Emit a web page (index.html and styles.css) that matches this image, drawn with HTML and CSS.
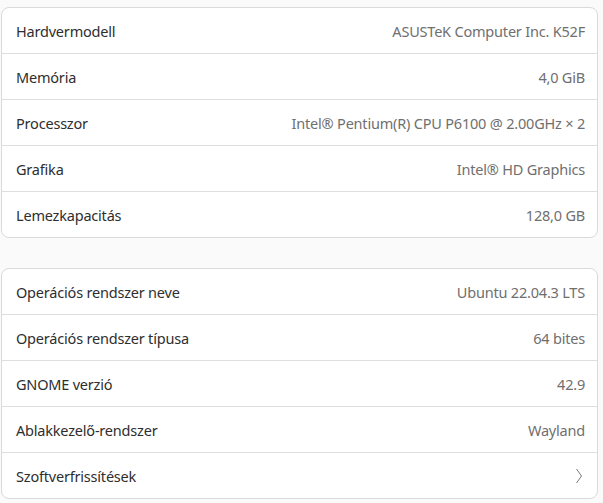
FILE: index.html
```html
<!DOCTYPE html>
<html lang="hu">
<head>
  <meta charset="UTF-8" />
  <title>Névjegy</title>
  <link rel="stylesheet" href="styles.css">
</head>
<body>
  <div class="list">
    <div class="row"><span class="label">Hardvermodell</span><span class="value">ASUSTeK Computer Inc. K52F</span></div>
    <div class="row"><span class="label">Memória</span><span class="value">4,0 GiB</span></div>
    <div class="row"><span class="label">Processzor</span><span class="value">Intel® Pentium(R) CPU P6100 @ 2.00GHz × 2</span></div>
    <div class="row"><span class="label">Grafika</span><span class="value">Intel® HD Graphics</span></div>
    <div class="row"><span class="label">Lemezkapacitás</span><span class="value">128,0 GB</span></div>
  </div>

  <div class="list">
    <div class="row"><span class="label">Operációs rendszer neve</span><span class="value">Ubuntu 22.04.3 LTS</span></div>
    <div class="row"><span class="label">Operációs rendszer típusa</span><span class="value">64 bites</span></div>
    <div class="row"><span class="label">GNOME verzió</span><span class="value">42.9</span></div>
    <div class="row"><span class="label">Ablakkezelő-rendszer</span><span class="value">Wayland</span></div>
    <div class="row link">
      <span class="label">Szoftverfrissítések</span>
      <svg class="chevron" width="8" height="16" viewBox="0 0 8 16"><path d="M1.5 1 L6.5 8 L1.5 15" fill="none" stroke="#7a7a7a" stroke-width="1"/></svg>
    </div>
  </div>
</body>
</html>
```

FILE: styles.css
```css
body {
  margin: 0;
  padding: 7px 5px 0 1px;
  background-color: #fafafa;
  font-family: "Noto Sans", sans-serif;
  font-size: 14.5px;
  letter-spacing: -0.2px;
}

.list {
  background-color: #fff;
  border: 1px solid #dadada;
  border-radius: 8px;
  margin-bottom: 30px;
}

.list:last-child {
  margin-bottom: 0;
}

.row {
  display: flex;
  justify-content: space-between;
  align-items: center;
  height: 45px;
  padding: 0 12px 0 14px;
  border-bottom: 1px solid #dedede;
}

.row:last-child {
  border-bottom: none;
}

.label {
  color: #2e2e2e;
}

.value {
  color: #6f6f6f;
}

.chevron {
  margin-right: 2px;
}
```
